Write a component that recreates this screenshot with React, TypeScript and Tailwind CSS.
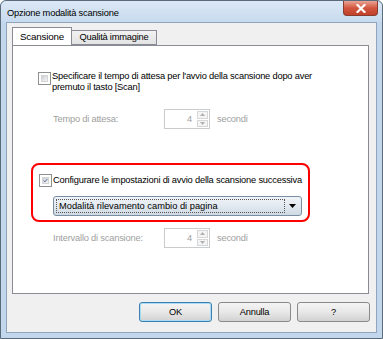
function Checkbox({ checked }: { checked?: boolean }) {
  return (
    <div className="w-[13px] h-[13px] shrink-0 border border-[#8e8f8f] bg-white p-[2px]">
      <div className="w-full h-full bg-gradient-to-br from-[#cbcfd5] to-[#f6f6f6] border border-[#d4d4d4] flex items-center justify-center">
        {checked && (
          <svg width="9" height="9" viewBox="0 0 9 9">
            <path d="M1 4.5 L3.5 7 L8 1.5" fill="none" stroke="#4a5f97" strokeWidth="1.6" />
          </svg>
        )}
      </div>
    </div>
  );
}

function SpinBox({ label }: { label: string }) {
  return (
    <div className="flex items-center">
      <span className="w-[111px] text-[#a0a0a0]">{label}</span>
      <div className="w-[46px] h-[20px] border border-[#c9cccf] bg-white flex">
        <span className="flex-1 text-right pr-[5px] leading-[18px] text-[#a0a0a0]">4</span>
        <div className="w-[12px] flex flex-col gap-[1px] py-[1px] pr-[1px]">
          <div className="flex-1 border border-[#d5d7d9] bg-[#f4f4f4] flex items-center justify-center">
            <svg width="5" height="3" viewBox="0 0 5 3"><path d="M0 3 L2.5 0 L5 3Z" fill="#b0b0b0" /></svg>
          </div>
          <div className="flex-1 border border-[#d5d7d9] bg-[#f4f4f4] flex items-center justify-center">
            <svg width="5" height="3" viewBox="0 0 5 3"><path d="M0 0 L2.5 3 L5 0Z" fill="#b0b0b0" /></svg>
          </div>
        </div>
      </div>
      <span className="ml-[7px] text-[#a0a0a0]">secondi</span>
    </div>
  );
}

function Button({ label, primary }: { label: string; primary?: boolean }) {
  return (
    <div
      className={`w-[73px] h-[20px] rounded-[3px] border flex items-center justify-center bg-gradient-to-b from-[#f4f4f4] via-[#e8e8e8] to-[#d2d2d2] ${
        primary ? "border-[#3c7fb1] shadow-[inset_0_0_0_1px_#a8dcf5]" : "border-[#8a8a8a]"
      }`}
    >
      {label}
    </div>
  );
}

export default function App() {
  return (
    <div
      className="w-[383px] h-[339px] flex flex-col bg-[#c3d7ec] border border-[#5b6b7c] rounded-t-[6px] text-[9.3px] tracking-[-0.2px] text-black leading-[11px]"
      style={{ fontFamily: '"Liberation Sans", Arial, sans-serif' }}
    >
      {/* title bar */}
      <div className="h-[21px] flex items-start bg-gradient-to-b from-[#dce8f5] to-[#c7daee] rounded-t-[6px]">
        <span className="pl-[6px] pt-[7px] text-[9.3px]">Opzione modalità scansione</span>
        <div className="ml-auto mr-[4px] w-[35px] h-[15px] rounded-b-[4px] border border-[#8a3b30] border-t-0 bg-gradient-to-b from-[#e8a394] via-[#d2563f] to-[#c0402a] flex items-center justify-center">
          <svg width="10" height="9" viewBox="0 0 10 9">
            <path d="M1.5 1 L8.5 8 M8.5 1 L1.5 8" stroke="#fff" strokeWidth="2.2" strokeLinecap="square" />
          </svg>
        </div>
      </div>

      {/* client */}
      <div className="flex-1 mx-[5px] mb-[5px] border border-[#8fa5bd] bg-[#f0f0f0] flex flex-col px-[5px] pt-[5px]">
        {/* tabs */}
        <div className="flex items-end h-[17px] relative z-10">
          <div className="w-[60px] h-[18px] bg-white border border-[#898c95] border-b-0 flex items-start justify-center pt-[3px] text-[9.8px]">
            Scansione
          </div>
          <div className="w-[85px] h-[15px] bg-gradient-to-b from-[#f2f2f2] to-[#e3e3e3] border border-[#898c95] border-l-0 flex items-center justify-center">
            Qualità immagine
          </div>
        </div>
        <div className="w-[357px] h-[249px] bg-white border border-[#898c95] flex flex-col pl-[25px]">
          {/* option 1 */}
          <div className="flex items-start gap-[1px] mt-[26px]">
            <Checkbox />
            <div className="-mt-[1px]">
              Specificare il tempo di attesa per l'avvio della scansione dopo aver
              <br />
              premuto il tasto [Scan]
            </div>
          </div>
          <div className="mt-[16px] pl-[15px]">
            <SpinBox label="Tempo di attesa:" />
          </div>

          {/* highlighted option */}
          <div className="mt-[34px] -ml-[7px] w-[279px] h-[59px] border-2 border-[#ff0000] rounded-[8px] flex flex-col pl-[6px] pt-[9px]">
            <div className="flex items-center gap-[1px]">
              <Checkbox checked />
              <span className="whitespace-nowrap">Configurare le impostazioni di avvio della scansione successiva</span>
            </div>
            <div className="mt-[9px] ml-[14px] w-[249px] h-[20px] rounded-[3px] border border-[#7a8ea3] bg-gradient-to-b from-[#f0f4f8] via-[#e2e9f0] to-[#cfd9e3] flex items-center p-[2px]">
              <div className="flex-1 h-full border border-dotted border-[#555] flex items-center pl-[2px] tracking-normal">
                Modalità rilevamento cambio di pagina
              </div>
              <div className="w-[14px] flex justify-center">
                <svg width="7" height="4" viewBox="0 0 7 4"><path d="M0 0 L7 0 L3.5 4Z" fill="#000" /></svg>
              </div>
            </div>
          </div>

          <div className="mt-[6px] pl-[15px]">
            <SpinBox label="Intervallo di scansione:" />
          </div>
        </div>

        {/* buttons */}
        <div className="flex justify-end gap-[6px] mt-[8px] pr-[1px]">
          <Button label="OK" primary />
          <Button label="Annulla" />
          <Button label="?" />
        </div>
      </div>
    </div>
  );
}
